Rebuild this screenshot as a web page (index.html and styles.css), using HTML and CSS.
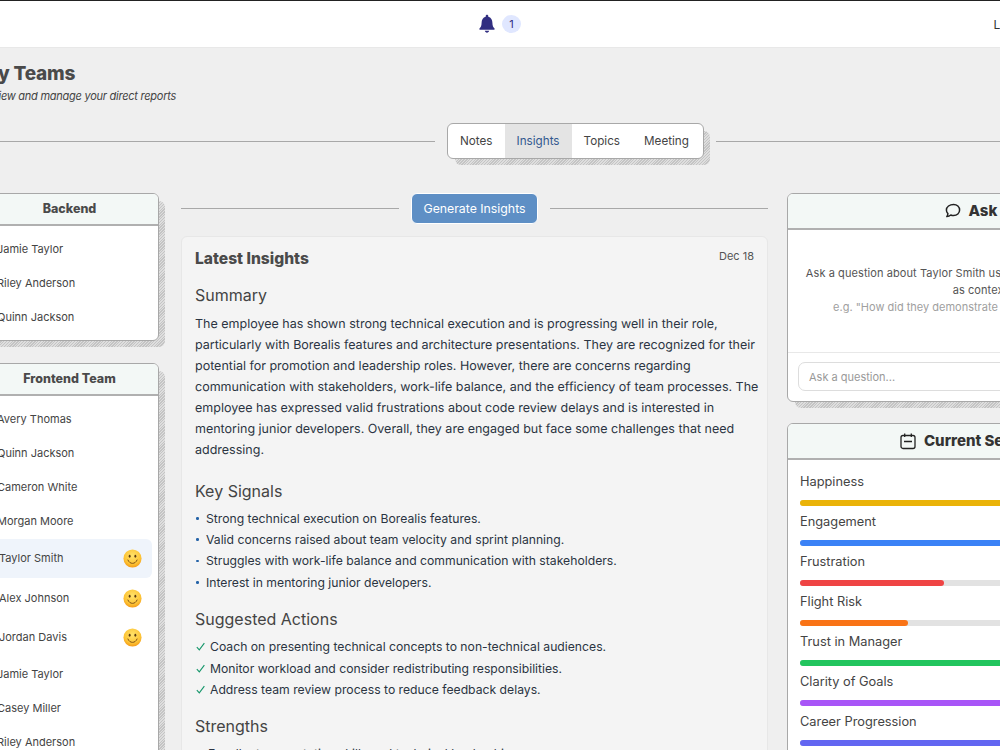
FILE: index.html
```html
<!DOCTYPE html>
<html lang="en">
<head>
<meta charset="utf-8">
<title>My Teams</title>
<link rel="stylesheet" href="styles.css">
</head>
<body>
<svg class="defs" width="0" height="0" aria-hidden="true">
  <defs>
    <radialGradient id="face" cx="50%" cy="35%" r="70%">
      <stop offset="0%" stop-color="#ffe36b"/>
      <stop offset="65%" stop-color="#fdc436"/>
      <stop offset="100%" stop-color="#f2900f"/>
    </radialGradient>
    <symbol id="smile" viewBox="0 0 20 20">
      <circle cx="10" cy="10" r="9.5" fill="url(#face)"/>
      <ellipse cx="7" cy="7.6" rx="1" ry="1.5" fill="#5b3a12"/>
      <ellipse cx="13" cy="7.6" rx="1" ry="1.5" fill="#5b3a12"/>
      <path d="M5.2 11.6c1 2.4 2.8 3.5 4.8 3.5s3.8-1.1 4.8-3.5" fill="none" stroke="#7a4a12" stroke-width="1" stroke-linecap="round"/>
    </symbol>
  </defs>
</svg>
<div class="page">
  <header class="topbar">
    <div class="notify">
      <svg class="bell" viewBox="0 0 20 20"><path d="M10 .8c-.8 0-1.3.6-1.3 1.4v.5C5.9 3.4 4.6 6 4.6 8.8c0 3.2-.9 4.6-2.1 5.8-.5.5-.2 1.2.5 1.2h14c.7 0 1-.7.5-1.2-1.2-1.2-2.1-2.6-2.1-5.8 0-2.8-1.3-5.4-4.1-6.1v-.5c0-.8-.5-1.4-1.3-1.4zM7.8 16.8c.2 1.1 1.1 1.9 2.2 1.9s2-.8 2.2-1.9z" fill="#312e81"/></svg>
      <span class="badge">1</span>
    </div>
    <span class="logout">Logout</span>
  </header>

  <section class="intro">
    <h1 class="page-title">My Teams</h1>
    <p class="page-sub">Review and manage your direct reports</p>
  </section>

  <div class="tabs-row">
    <span class="rule"></span>
    <nav class="tabs hatch">
      <span class="tab">Notes</span>
      <span class="tab tab-active">Insights</span>
      <span class="tab">Topics</span>
      <span class="tab">Meeting</span>
    </nav>
    <span class="rule"></span>
  </div>

  <main class="columns">
    <aside class="col-left">
      <section class="panel hatch">
        <h2 class="panel-head">Backend</h2>
        <ul class="people">
          <li class="person">Jamie Taylor</li>
          <li class="person">Riley Anderson</li>
          <li class="person">Quinn Jackson</li>
        </ul>
      </section>
      <section class="panel hatch">
        <h2 class="panel-head">Frontend Team</h2>
        <ul class="people">
          <li class="person">Avery Thomas</li>
          <li class="person">Quinn Jackson</li>
          <li class="person">Cameron White</li>
          <li class="person">Morgan Moore</li>
          <li class="person person-mood person-active">Taylor Smith<svg class="mood"><use href="#smile"/></svg></li>
          <li class="person person-mood">Alex Johnson<svg class="mood"><use href="#smile"/></svg></li>
          <li class="person person-mood">Jordan Davis<svg class="mood"><use href="#smile"/></svg></li>
          <li class="person">Jamie Taylor</li>
          <li class="person">Casey Miller</li>
          <li class="person">Riley Anderson</li>
        </ul>
      </section>
    </aside>

    <div class="col-mid">
      <div class="gen-row">
        <span class="rule"></span>
        <button class="gen-btn">Generate Insights</button>
        <span class="rule"></span>
      </div>
      <article class="insights">
        <div class="insights-head">
          <h2 class="insights-title">Latest Insights</h2>
          <span class="insights-date">Dec 18</span>
        </div>
        <h3 class="sec-title sec-first">Summary</h3>
        <p class="summary">The employee has shown strong technical execution and is progressing well in their role,<br>particularly with Borealis features and architecture presentations. They are recognized for their<br>potential for promotion and leadership roles. However, there are concerns regarding<br>communication with stakeholders, work-life balance, and the efficiency of team processes. The<br>employee has expressed valid frustrations about code review delays and is interested in<br>mentoring junior developers. Overall, they are engaged but face some challenges that need<br>addressing.</p>
        <h3 class="sec-title">Key Signals</h3>
        <ul class="list">
          <li class="dot-item">Strong technical execution on Borealis features.</li>
          <li class="dot-item">Valid concerns raised about team velocity and sprint planning.</li>
          <li class="dot-item">Struggles with work-life balance and communication with stakeholders.</li>
          <li class="dot-item">Interest in mentoring junior developers.</li>
        </ul>
        <h3 class="sec-title">Suggested Actions</h3>
        <ul class="list">
          <li class="check-item"><svg class="check" viewBox="0 0 12 12"><path d="M2 6.6l2.7 3L10.2 2.4" fill="none" stroke="#15966a" stroke-width="1.2"/></svg>Coach on presenting technical concepts to non-technical audiences.</li>
          <li class="check-item"><svg class="check" viewBox="0 0 12 12"><path d="M2 6.6l2.7 3L10.2 2.4" fill="none" stroke="#15966a" stroke-width="1.2"/></svg>Monitor workload and consider redistributing responsibilities.</li>
          <li class="check-item"><svg class="check" viewBox="0 0 12 12"><path d="M2 6.6l2.7 3L10.2 2.4" fill="none" stroke="#15966a" stroke-width="1.2"/></svg>Address team review process to reduce feedback delays.</li>
        </ul>
        <h3 class="sec-title">Strengths</h3>
        <ul class="list">
          <li class="dot-item dot-item-wide">Excellent presentation skills and technical leadership.</li>
        </ul>
      </article>
    </div>

    <aside class="col-right">
      <section class="panel hatch">
        <h2 class="panel-head panel-head-lg">
          <svg class="head-icon" viewBox="0 0 18 18"><path d="M9.6 2.4c3.4 0 6 2.4 6 5.6s-2.6 5.6-6 5.6c-1 0-2-.2-2.8-.6-1 .8-2.2 1.4-4 1.6.7-.9 1-1.9 1.1-3-1-1-1.5-2.2-1.5-3.6 0-3.2 3.2-5.6 7.2-5.6z" fill="none" stroke="#222" stroke-width="1.5" stroke-linejoin="round"/></svg>
          Ask AI
        </h2>
        <div class="ask-body">
          <p class="ask-line">Ask a question about Taylor Smith using the current session notes as context</p>
          <p class="ask-hint">e.g. "How did they demonstrate leadership on Borealis?"</p>
        </div>
        <div class="ask-foot">
          <div class="ask-input">Ask a question...</div>
        </div>
      </section>
      <section class="panel hatch">
        <h2 class="panel-head panel-head-lg">
          <svg class="head-icon" viewBox="0 0 18 18"><rect x="2" y="3.5" width="14" height="13" rx="2" fill="none" stroke="#222" stroke-width="1.3"/><path d="M5.7 1.5v3.5M12.3 1.5v3.5M5 9.5h8" fill="none" stroke="#222" stroke-width="1.3"/></svg>
          Current Sentiment
        </h2>
        <div class="meters">
          <div class="meter"><span class="meter-name">Happiness</span><div class="track"><div class="fill fill-yellow" style="width:80%"></div></div></div>
          <div class="meter"><span class="meter-name">Engagement</span><div class="track"><div class="fill fill-blue" style="width:70%"></div></div></div>
          <div class="meter"><span class="meter-name">Frustration</span><div class="track"><div class="fill fill-red" style="width:40%"></div></div></div>
          <div class="meter"><span class="meter-name">Flight Risk</span><div class="track"><div class="fill fill-orange" style="width:30%"></div></div></div>
          <div class="meter"><span class="meter-name">Trust in Manager</span><div class="track"><div class="fill fill-green" style="width:80%"></div></div></div>
          <div class="meter"><span class="meter-name">Clarity of Goals</span><div class="track"><div class="fill fill-purple" style="width:70%"></div></div></div>
          <div class="meter"><span class="meter-name">Career Progression</span><div class="track"><div class="fill fill-indigo" style="width:70%"></div></div></div>
        </div>
      </section>
    </aside>
  </main>
</div>
</body>
</html>
```
FILE: styles.css
```css
* { box-sizing: border-box; }
html, body { margin: 0; height: 750px; overflow: hidden; }
body { background: #efefef; font-family: Inter, "Liberation Sans", sans-serif; color: #444; }
ul { list-style: none; margin: 0; padding: 0; }
h1, h2, h3, p { margin: 0; }
.defs { display: block; height: 0; }

.page { width: 1191px; margin-left: -20px; }

.topbar {
  height: 48px; margin-left: 20px; width: 1171px; background: #fff;
  border-top: 1px solid #222; border-bottom: 1px solid #e8e8e8;
  display: flex; align-items: center;
}
.notify { display: flex; align-items: center; gap: 5px; margin-left: 477px; }
.bell { width: 20px; height: 20px; display: block; }
.badge {
  width: 19px; height: 18px; border-radius: 50%; background: #e0e7ff; color: #312e81;
  font-size: 11px; display: flex; align-items: center; justify-content: center;
}
.logout { font-size: 12px; margin-left: auto; margin-right: 138px; color: #333; }

.intro { padding: 14px 0 0 0; height: 75px; }
.page-title { font-size: 19px; font-weight: 800; color: #4a4a4a; line-height: 24px; letter-spacing: -.2px; }
.page-sub { font-size: 11px; font-style: italic; color: #444; line-height: 18px; margin-top: 1px; letter-spacing: -.25px; }

.rule { flex: 1; height: 1px; background: #a8a8a8; }
.tabs-row { display: flex; align-items: center; gap: 12px; height: 36px; }
.tabs {
  display: flex; height: 36px; background: #fff;
  border: 1px solid #a8a8a8; border-radius: 6px; width: 257px; flex: none;
}
.tab { font-size: 11.7px; padding: 0 12px; line-height: 34px; color: #444; }
.tab-active { background: #e4e4e4; color: #33588f; }

.hatch { position: relative; }
.hatch::after {
  content: ""; position: absolute; z-index: -1; left: 7px; top: 7px; right: -7px; bottom: -7px;
  background: repeating-linear-gradient(135deg, #c4c4c4 0 1px, #dedede 1px 2px);
  border-radius: 6px;
}

.columns {
  display: grid; grid-template-columns: 182px 587px 386px; column-gap: 19px;
  margin-top: 34px; align-items: start; position: relative; z-index: 0;
}
.col-left { display: flex; flex-direction: column; gap: 22px; padding-right: 3px; }
.col-right { display: flex; flex-direction: column; gap: 21px; }
.panel { background: #fff; border: 1px solid #a8a8a8; border-radius: 6px; }
.panel-head {
  height: 32px; background: #f3f8f6; border-bottom: 2px solid #b0b0b0; border-radius: 5px 5px 0 0;
  font-size: 12.5px; font-weight: 800; color: #4a4a4a; text-align: center; line-height: 30px;
}
.panel-head-lg { height: 36px; font-size: 15px; line-height: 34px; display: flex; align-items: center; justify-content: center; gap: 7px; color: #333; }
.head-icon { width: 18px; height: 18px; flex: none; }

.people { padding: 6px 6px 6px 16px; }
.person { height: 34px; font-size: 11px; line-height: 34px; color: #444; }
.person-mood { height: 39.4px; line-height: 39px; display: flex; align-items: center; justify-content: space-between; padding-right: 10px; margin-left: -16px; padding-left: 18px; border-radius: 6px; }
.person-active { background: #eff4fb; margin-top: 1px; }
.mood { width: 19px; height: 19px; flex: none; }

.gen-row { display: flex; align-items: center; gap: 12px; height: 31px; }
.gen-btn {
  width: 127px; height: 31px; border: 1px solid #fff; border-radius: 6px; background: #5e8fc5; color: #fff;
  font: 12.3px Inter, "Liberation Sans", sans-serif; padding: 0;
}
.insights {
  margin-top: 12px; padding: 12px 13px 0; background: #f4f4f4; border: 1px solid #e7e7e7; border-radius: 6px;
  height: 560px; color: #333;
}
.insights-head { display: flex; justify-content: space-between; align-items: flex-start; height: 20px; }
.insights-title { font-size: 15.6px; font-weight: 800; line-height: 20px; color: #4a4a4a; }
.insights-date { font-size: 11px; line-height: 16px; color: #555; margin-top: -1px; }
.sec-title { font-size: 16px; font-weight: 400; line-height: 20px; color: #444; margin-top: 16px; }
.sec-first { margin-top: 16px; }
.summary { font-size: 12.5px; text-rendering: geometricPrecision; white-space: nowrap; line-height: 21px; margin-top: 8.5px; color: #2b3442; }
.summary + .sec-title { margin-top: 20px; }
.list { margin-top: 7px; font-size: 12.2px; line-height: 21.4px; color: #2b3442; }
.dot-item { padding-left: 11px; position: relative; }
.dot-item-wide { padding-left: 13px; }
.dot-item::before { content: ""; position: absolute; left: 1px; top: 9.5px; width: 2.5px; height: 2.5px; background: #2563a8; border-radius: 50%; }
.dot-item-wide::before { display: none; }
.check-item { display: flex; align-items: center; gap: 4px; }
.check { width: 11px; height: 11px; flex: none; }

.ask-body { height: 122px; padding: 35px 16px 0; text-align: center; font-size: 11px; line-height: 16.5px; color: #555; }
.ask-line { letter-spacing: .08px; }
.ask-hint { color: #a0a0a0; margin-top: 1px; }
.ask-foot { border-top: 1px solid #e8e8e8; padding: 9px 10px; height: 49px; }
.ask-input { height: 29px; border: 1px solid #ddd; border-radius: 7px; font-size: 11px; line-height: 29px; padding-left: 10px; color: #999; background: #fff; }
.meters { padding: 13px 12px 20px; display: flex; flex-direction: column; }
.meter { height: 40px; }
.meter-name { display: block; font-size: 12.8px; line-height: 18px; color: #444; height: 27px; }
.track { height: 6px; background: #e2e2e2; border-radius: 3px; }
.fill { height: 6px; border-radius: 3px; }
.fill-yellow { background: #eab308; }
.fill-blue { background: #3b82f6; }
.fill-red { background: #ef4444; }
.fill-orange { background: #f97316; }
.fill-green { background: #22c55e; }
.fill-purple { background: #a855f7; }
.fill-indigo { background: #6366f1; }
```
